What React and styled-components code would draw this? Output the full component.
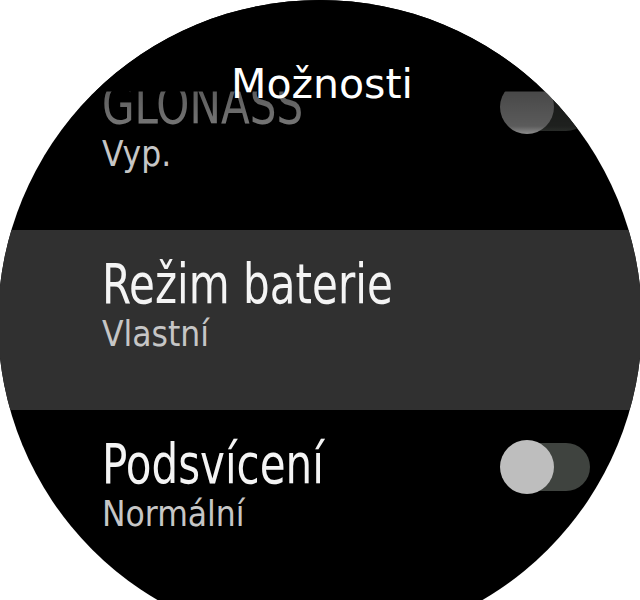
import React from 'react';
import styled, { createGlobalStyle } from 'styled-components';

const GlobalStyle = createGlobalStyle`
  html, body {
    margin: 0;
    padding: 0;
    background: #ffffff;
    overflow: hidden;
  }
`;

const items = [
  { title: 'GLONASS', value: 'Vyp.', toggle: true },
  { title: 'Režim baterie', value: 'Vlastní', active: true },
  { title: 'Podsvícení', value: 'Normální', toggle: true },
];

export default function App() {
  return (
    <Page>
      <GlobalStyle />
      <Watch>
        <Header>
          <Title>Možnosti</Title>
        </Header>
        <List>
          {items.map(item => (
            <Row key={item.title} $active={item.active}>
              <TextCol>
                <Label>
                  <Squeeze>{item.title}</Squeeze>
                </Label>
                <Value>{item.value}</Value>
              </TextCol>
              {item.toggle && (
                <Toggle>
                  <Knob />
                </Toggle>
              )}
            </Row>
          ))}
        </List>
      </Watch>
    </Page>
  );
}

const Page = styled.div`
  width: 640px;
  height: 600px;
  overflow: hidden;
  background: #ffffff;
`;

const Watch = styled.div`
  position: relative;
  width: 644px;
  height: 644px;
  margin-left: -2px;
  border-radius: 50%;
  background: #000000;
  overflow: hidden;
`;

const Header = styled.div`
  position: absolute;
  top: 0;
  left: 0;
  right: 0;
  height: 142px;
  z-index: 2;
  display: flex;
  justify-content: center;
  padding-top: 64px;
  box-sizing: border-box;
  background: linear-gradient(
    to bottom,
    #000000 0px,
    #000000 91px,
    rgba(0, 0, 0, 0.62) 92px,
    rgba(0, 0, 0, 0.52) 126px,
    rgba(0, 0, 0, 0) 142px
  );
`;

const Title = styled.div`
  font-family: 'DejaVu Sans', 'Noto Sans', sans-serif;
  font-size: 41px;
  line-height: 41px;
  color: #ffffff;
  margin-left: 4px;
`;

const List = styled.div`
  display: flex;
  flex-direction: column;
  padding-top: 50px;
`;

const Row = styled.div`
  display: flex;
  align-items: flex-start;
  height: 180px;
  padding: 0 52px 0 104px;
  background: ${p => (p.$active ? '#303030' : 'transparent')};
`;

const TextCol = styled.div`
  flex: 1;
  display: flex;
  flex-direction: column;
  padding-top: 28px;
`;

const Label = styled.div`
  font-family: 'DejaVu Sans Condensed', 'DejaVu Sans', sans-serif;
  font-size: 55px;
  line-height: 52px;
  color: #f4f4f4;
  white-space: nowrap;
`;

const Squeeze = styled.span`
  display: inline-block;
  transform: scaleX(0.85);
  transform-origin: left center;
`;

const Value = styled.div`
  margin-top: 7px;
  font-family: 'DejaVu Sans Condensed', 'DejaVu Sans', sans-serif;
  font-size: 35px;
  line-height: 35px;
  color: #c6c6c6;
`;

const Toggle = styled.div`
  position: relative;
  width: 87px;
  height: 48px;
  margin-top: 33px;
  border-radius: 24px;
  background: #3f433f;
`;

const Knob = styled.div`
  position: absolute;
  left: -3px;
  top: -3px;
  width: 54px;
  height: 54px;
  border-radius: 50%;
  background: #bebebe;
`;
